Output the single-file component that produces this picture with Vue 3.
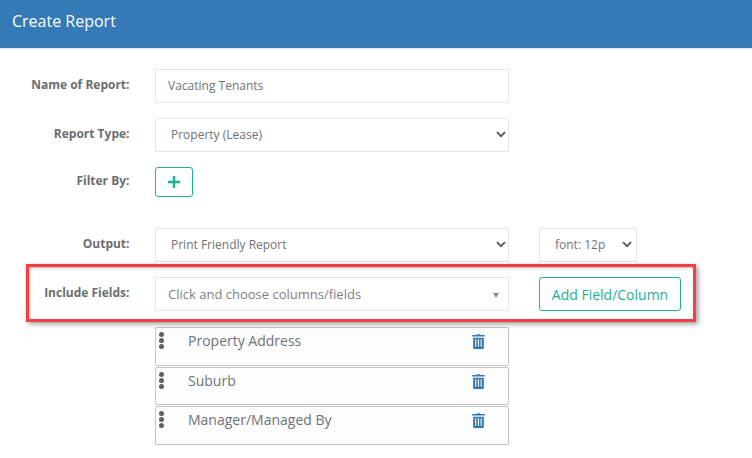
<script setup>
const fields = ['Property Address', 'Suburb', 'Manager/Managed By']
</script>

<template>
  <div class="page">
    <header class="head">Create Report</header>
    <form class="form" @submit.prevent>
      <div class="row">
        <label class="label">Name of Report:</label>
        <input class="control input" value="Vacating Tenants" />
      </div>
      <div class="row">
        <label class="label">Report Type:</label>
        <div class="control picker">
          <span>Property (Lease)</span>
          <svg class="chev" viewBox="0 0 10 7"><path d="M1 1.2 5 5.2 9 1.2" /></svg>
        </div>
      </div>
      <div class="row">
        <label class="label">Filter By:</label>
        <button class="btn plus" type="button" aria-label="Add filter">
          <svg viewBox="0 0 12 12"><path d="M6 0v12M0 6h12" /></svg>
        </button>
      </div>
      <div class="row output">
        <label class="label">Output:</label>
        <div class="control picker">
          <span>Print Friendly Report</span>
          <svg class="chev" viewBox="0 0 10 7"><path d="M1 1.2 5 5.2 9 1.2" /></svg>
        </div>
        <div class="control picker small">
          <span>font: 12p</span>
          <svg class="chev" viewBox="0 0 10 7"><path d="M1 1.2 5 5.2 9 1.2" /></svg>
        </div>
      </div>
      <div class="row include">
        <div class="highlight"></div>
        <label class="label">Include Fields:</label>
        <div class="control picker chooser">
          <span>Click and choose columns/fields</span>
          <i class="caret"></i>
        </div>
        <button class="btn add" type="button">Add Field/Column</button>
      </div>
      <ul class="list">
        <li v-for="f in fields" :key="f" class="item">
          <span class="grip"><i></i><i></i><i></i></span>
          <span class="name">{{ f }}</span>
          <svg class="trash" viewBox="0 0 12 14">
            <path d="M4.2 1 4.6.2h2.8L7.8 1H11.4a.6.6 0 0 1 .6.6v.8H0v-.8A.6.6 0 0 1 .6 1Z" />
            <path fill-rule="evenodd" d="M1 3.4h10V13a1 1 0 0 1-1 1H2a1 1 0 0 1-1-1ZM3 5v7h1V5Zm2.5 0v7h1V5ZM8 5v7h1V5Z" />
          </svg>
        </li>
      </ul>
    </form>
  </div>
</template>

<style scoped>
.page {
  width: 752px;
  height: 458px;
  overflow: hidden;
  background: #fff;
  font-family: "Open Sans", sans-serif;
  color: #6f7377;
}
.head {
  height: 48px;
  box-sizing: content-box;
  background: #337ab7;
  border-bottom: 1px solid #e3e6e8;
  color: #fff;
  font-size: 16px;
  line-height: 42px;
  padding-left: 12px;
}
.form {
  display: flex;
  flex-direction: column;
  gap: 15px;
  padding-top: 20px;
}
.row {
  position: relative;
  display: flex;
  align-items: center;
}
.label {
  width: 129.5px;
  margin-right: 25.5px;
  margin-top: -4px;
  text-align: right;
  font-size: 12px;
  font-weight: 700;
  color: #6b6e71;
}
.control {
  box-sizing: border-box;
  width: 354px;
  height: 34px;
  border: 1px solid #e5e5e5;
  background: #fff;
  font: 12px "Open Sans", sans-serif;
  color: #6f7377;
}
.input {
  padding: 0 12px 2px;
  outline: none;
}
.picker {
  position: relative;
  display: flex;
  align-items: center;
  padding-left: 15px;
  padding-bottom: 2px;
}
.chev {
  position: absolute;
  right: 2px;
  top: 12px;
  width: 10px;
  height: 7px;
  fill: none;
  stroke: #555;
  stroke-width: 1.8;
}
.output {
  margin-top: 16px;
}
.small {
  width: 98px;
  margin-left: 30px;
  padding-left: 15px;
}
.small .chev {
  right: 4px;
}
.btn {
  box-sizing: border-box;
  border: 1px solid #1ab394;
  border-radius: 3px;
  background: #fff;
  color: #1ab394;
  padding: 0;
  font-family: "Open Sans", sans-serif;
}
.plus {
  width: 38px;
  height: 30px;
  display: flex;
  align-items: center;
  justify-content: center;
}
.plus svg {
  width: 12px;
  height: 12px;
  fill: none;
  stroke: #1ab394;
  stroke-width: 2.4;
}
.chooser {
  padding-left: 12px;
  padding-bottom: 0;
  font-size: 13px;
  color: #7c8085;
}
.caret {
  position: absolute;
  right: 9px;
  top: 15px;
  border-left: 3.5px solid transparent;
  border-right: 3.5px solid transparent;
  border-top: 5px solid #888;
}
.add {
  width: 142px;
  height: 34px;
  margin-left: 30px;
  font-size: 14px;
}
.highlight {
  position: absolute;
  left: 26px;
  top: -13px;
  width: 670px;
  height: 58px;
  box-sizing: border-box;
  border: 3px solid #f23f44;
  box-shadow: 2px 2px 5px rgba(0, 0, 0, 0.4), inset 1px 1px 3px rgba(0, 0, 0, 0.3);
  pointer-events: none;
}
.list {
  list-style: none;
  margin: 1px 0 0 155px;
  padding: 0;
  display: flex;
  flex-direction: column;
  gap: 1px;
  width: 354px;
}
.item {
  box-sizing: border-box;
  height: 38.5px;
  display: flex;
  align-items: flex-start;
  border: 1px solid #c4c4c4;
  border-radius: 2px;
  background: #fdfdfd;
}
.grip {
  display: flex;
  flex-direction: column;
  gap: 1px;
  width: 5px;
  margin: 4px 0 0 3px;
}
.grip i {
  width: 5px;
  height: 5px;
  border-radius: 50%;
  background: #5f5f5f;
}
.name {
  flex: 1;
  margin-left: 24px;
  font-size: 14px;
  line-height: 26px;
  color: #6f7377;
}
.trash {
  width: 13px;
  height: 15px;
  margin: 6px 23px 0 0;
  fill: #337ab7;
}
</style>
